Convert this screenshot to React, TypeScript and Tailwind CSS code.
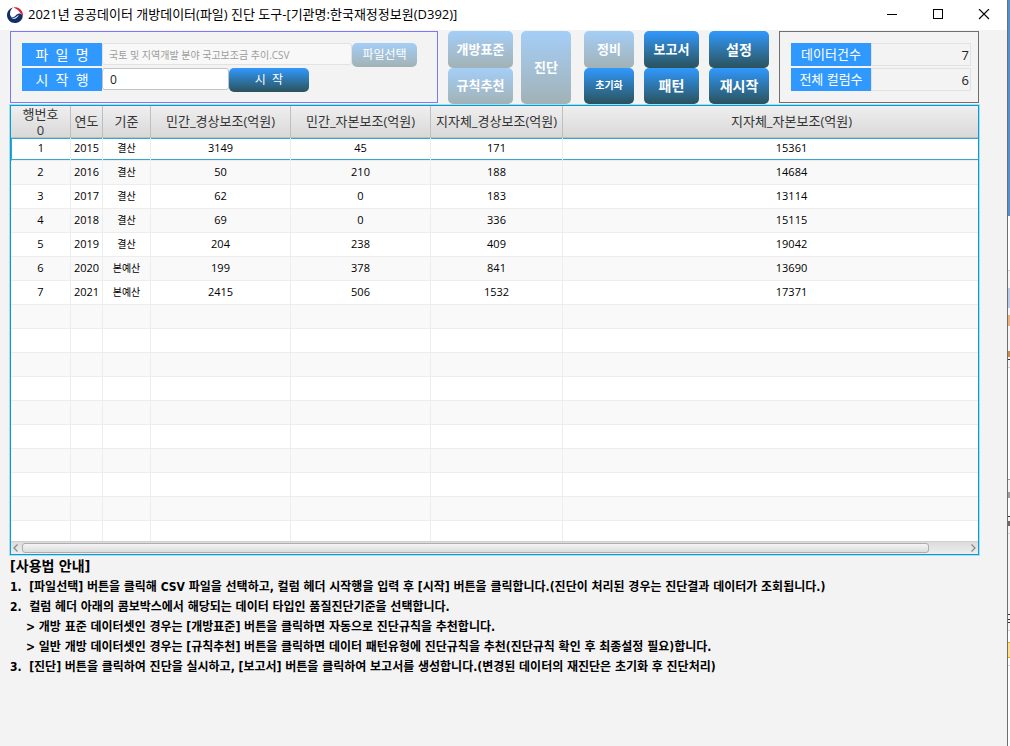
import { useState } from "react";
import type { ReactNode } from "react";

const columns = [
  "연도",
  "기준",
  "민간_경상보조(억원)",
  "민간_자본보조(억원)",
  "지자체_경상보조(억원)",
  "지자체_자본보조(억원)",
];

const rows = [
  ["1", "2015", "결산", "3149", "45", "171", "15361"],
  ["2", "2016", "결산", "50", "210", "188", "14684"],
  ["3", "2017", "결산", "62", "0", "183", "13114"],
  ["4", "2018", "결산", "69", "0", "336", "15115"],
  ["5", "2019", "결산", "204", "238", "409", "19042"],
  ["6", "2020", "본예산", "199", "378", "841", "13690"],
  ["7", "2021", "본예산", "2415", "506", "1532", "17371"],
];

const emptyRows = Array.from({ length: 10 }, (_, i) => i);

const edgeStrips = [
  "h-[216px] bg-[#4f92d3]",
  "h-[54px] bg-white",
  "h-px bg-[#d0d0d0]",
  "h-[17px] bg-[#f5f5f5]",
  "h-[20px] bg-[#b9cbe6]",
  "h-[7px] bg-[#f5f5f5]",
  "h-[11px] bg-[#eab27c]",
  "h-[25px] bg-[#f5f5f5]",
  "h-[6px] bg-[#c98a4a]",
  "h-[2px] bg-[#f5f5f5]",
  "h-px bg-[#333333]",
  "h-[7px] bg-[#f5f5f5]",
  "h-px bg-[#d8d8d8]",
  "h-[111px] bg-white",
  "h-px bg-[#9a9a9a]",
  "h-[12px] bg-[#f5f5f5]",
  "h-[6px] bg-[#a0a0a0]",
  "h-[18px] bg-white",
  "h-px bg-[#333333]",
  "h-[4px] bg-[#f5f5f5]",
  "h-[5px] bg-[#6f6a66]",
  "h-[7px] bg-[#f5f5f5]",
  "h-px bg-[#d8d8d8]",
  "h-[80px] bg-[#f5f5f5]",
  "h-px bg-[#333333]",
  "h-[4px] bg-[#f5f5f5]",
  "h-px bg-[#333333]",
  "h-[2px] bg-[#f5f5f5]",
  "h-px bg-[#333333]",
  "h-[7px] bg-[#f5f5f5]",
  "h-px bg-[#d8d8d8]",
  "h-[11px] bg-white",
  "h-px bg-[#e0b400]",
  "h-[14px] bg-[#fbe28a]",
  "h-px bg-[#e0b400]",
  "h-[7px] bg-white",
  "h-px bg-[#d8d8d8]",
  "flex-1 bg-white",
];

function Logo() {
  return (
    <svg viewBox="0 0 32 32" className="h-4 w-4 shrink-0" aria-hidden="true">
      <path
        d="M12 1C5 3 0 9 0 16.500 0 25 7 32 16 32c7 0 13-4.500 15-10.500 1-4.500-2-8.500-6-8.500-3.500 0-5.500 2-8 4.500-3.500 3.500-7.500 4-9.500 1C4.500 13.500 6.500 5.500 12 1Z"
        fill="#0f2f66"
      />
      <path
        d="M13 .8C21-1 30 4.500 31.700 13.500c.5 3 .3 5-.4 7C31 16 28 12.500 25.500 10.500 23 6 18.500 3 13 .8Z"
        fill="#d8203c"
      />
      <path
        d="M8 20.500c3.500 2.500 7.500 1.500 10.500-1 2-1.800 3.500-3 6-2.500-3 .8-3.500 3.500-6.500 5.500-3.500 2-8 1-10-2Z"
        fill="#ffffff"
      />
    </svg>
  );
}

function ToolButton({
  children,
  className,
  disabled = false,
}: {
  children: ReactNode;
  className: string;
  disabled?: boolean;
}) {
  return (
    <button
      type="button"
      disabled={disabled}
      className={`flex items-center justify-center whitespace-nowrap rounded-[5px] text-white ${
        disabled
          ? "bg-linear-to-b from-[#a4cef8] to-[#a2b2b5]"
          : "bg-linear-to-b from-[#3099ff] to-[#2a525c]"
      } ${className}`}
    >
      {children}
    </button>
  );
}

const labelClass =
  "flex h-[23px] w-20 shrink-0 items-center justify-center whitespace-pre bg-[#3099ff] text-white";

export default function App() {
  const [startRow, setStartRow] = useState("0");

  return (
    <div className="flex min-h-screen bg-[#f3f3f3] font-['Open_Sans','Noto_Sans_CJK_KR',sans-serif] text-black">
      <div className="flex min-w-0 flex-1 flex-col border-r border-[#6f6f6f]">
        <header className="flex h-[30px] items-center justify-between bg-white pl-[7px] pr-[17px]">
          <div className="flex items-center gap-[5px]">
            <Logo />
            <h1 className="whitespace-nowrap pb-[2px] text-[13px] leading-5">
              2021년 공공데이터 개방데이터(파일) 진단 도구-[기관명:한국재정정보원(D392)]
            </h1>
          </div>
          <div className="flex items-center gap-[34px]">
            <button type="button" aria-label="최소화">
              <svg viewBox="0 0 12 12" className="h-3 w-3" shapeRendering="crispEdges">
                <path d="M1 5.500h10" stroke="#000" fill="none" />
              </svg>
            </button>
            <button type="button" aria-label="최대화">
              <svg viewBox="0 0 12 12" className="h-3 w-3" shapeRendering="crispEdges">
                <path d="M1.500 .5h9v9h-9z" stroke="#000" fill="none" />
              </svg>
            </button>
            <button type="button" aria-label="닫기">
              <svg viewBox="0 0 12 12" className="h-3 w-3">
                <path d="M1 0l10 10M11 0L1 10" stroke="#000" strokeWidth="1.100" fill="none" />
              </svg>
            </button>
          </div>
        </header>

        <main className="flex flex-col pl-[10px] pr-7 pt-px">
          <div className="flex h-[73px] items-start justify-between">
            <section className="flex h-[72px] w-[428px] flex-col gap-[2px] border border-[#7b78ff] px-[11px] pt-[11px]">
              <div className="flex h-[23px] items-start">
                <label htmlFor="file" className={`${labelClass} text-[14px]`}>
                  {"파  일  명"}
                </label>
                <input
                  id="file"
                  disabled
                  value="국토 및 지역개발 분야 국고보조금 추이.CSV"
                  className="h-[22px] w-[250px] rounded-[3px] border border-[#e2e2e2] bg-[#f8f8f8] px-[6px] text-[10px] text-[#9c9c9c]"
                />
                <ToolButton disabled className="h-6 w-[65px] text-[12px]">
                  파일선택
                </ToolButton>
              </div>
              <div className="flex h-[23px] items-start">
                <label htmlFor="start" className={`${labelClass} text-[14px]`}>
                  {"시  작  행"}
                </label>
                <input
                  id="start"
                  value={startRow}
                  onChange={(e) => setStartRow(e.target.value)}
                  className="h-[22px] w-[127px] rounded-[3px] border border-[#c3c3c3] bg-white px-[7px] text-[12px] text-[#222222]"
                />
                <ToolButton className="h-6 w-20 whitespace-pre text-[12px]">{"시  작"}</ToolButton>
              </div>
            </section>

            <div className="flex h-[73px] gap-[10px]">
              <div className="flex gap-[13px]">
                <div className="flex gap-2">
                  <div className="flex w-[65px] flex-col">
                    <ToolButton disabled className="flex-1 text-[13px] font-bold">
                      개방표준
                    </ToolButton>
                    <ToolButton disabled className="flex-1 text-[13px] font-bold">
                      규칙추천
                    </ToolButton>
                  </div>
                  <ToolButton disabled className="w-[50px] text-[13px] font-bold">
                    진단
                  </ToolButton>
                </div>
                <div className="flex w-[50px] flex-col">
                  <ToolButton disabled className="flex-1 text-[13px] font-bold">
                    정비
                  </ToolButton>
                  <ToolButton className="flex-1 text-[10px] font-bold">초기화</ToolButton>
                </div>
              </div>
              <div className="flex w-[55px] flex-col">
                <ToolButton className="flex-1 text-[13px] font-bold">보고서</ToolButton>
                <ToolButton className="flex-1 text-[14px] font-bold">패턴</ToolButton>
              </div>
              <div className="flex w-[60px] flex-col">
                <ToolButton className="flex-1 text-[14px] font-bold">설정</ToolButton>
                <ToolButton className="flex-1 text-[14px] font-bold">재시작</ToolButton>
              </div>
            </div>

            <section className="flex h-[72px] w-[200px] flex-col gap-[2px] border border-[#6f6f6f] pl-[11px] pr-[7px] pt-[11px]">
              <div className="flex">
                <label htmlFor="dataCount" className={`${labelClass} text-[13px]`}>
                  데이터건수
                </label>
                <input
                  id="dataCount"
                  readOnly
                  value="7"
                  className="h-[23px] w-[100px] min-w-0 border border-[#e2e2e2] bg-[#f3f3f3] px-px text-right text-[13px] text-[#222222]"
                />
              </div>
              <div className="flex">
                <label htmlFor="columnCount" className={`${labelClass} text-[13px]`}>
                  전체 컬럼수
                </label>
                <input
                  id="columnCount"
                  readOnly
                  value="6"
                  className="h-[23px] w-[100px] min-w-0 border border-[#e2e2e2] bg-[#f3f3f3] px-px text-right text-[13px] text-[#222222]"
                />
              </div>
            </section>
          </div>

          <div className="mt-px border border-[#039ed3] bg-white shadow-[0_0_0_1px_#a9dcee]">
            <div className="h-[435px] overflow-hidden">
              <table className="w-[calc(100%+42px)] table-fixed border-separate border-spacing-0 text-center">
                <colgroup>
                  <col className="w-[60px]" />
                  <col className="w-8" />
                  <col className="w-12" />
                  <col className="w-[140px]" />
                  <col className="w-[140px]" />
                  <col className="w-[132px]" />
                  <col />
                </colgroup>
                <thead>
                  <tr className="h-8 bg-linear-to-b from-[#efefef] to-[#d8d8d8] text-[13px] leading-4 text-[#333333]">
                    <th className="h-8 border-r border-[#bfbfbf] p-0 font-normal shadow-[inset_0_-1px_0_#bfbfbf]">
                      행번호
                      <br />0
                    </th>
                    {columns.map((name) => (
                      <th
                        key={name}
                        className="h-8 whitespace-nowrap border-r border-[#bfbfbf] p-0 pb-[2px] font-normal shadow-[inset_0_-1px_0_#bfbfbf] last:border-r-0"
                      >
                        {name}
                      </th>
                    ))}
                  </tr>
                </thead>
                <tbody className="text-[11px] leading-4">
                  {rows.map((row, r) => (
                    <tr key={row[0]} className="odd:bg-white even:bg-[#f9f9f9]">
                      {row.map((cell, c) => (
                        <td
                          key={c}
                          className={`border-b border-r border-[#ededed] p-0 last:border-r-0 ${
                            r === 0
                              ? "h-[23px] pb-[2px] shadow-[inset_0_1px_0_#35a5d5,inset_0_-1px_0_#35a5d5] first:border-l first:border-l-[#35a5d5]"
                              : "h-6 pb-px"
                          } ${c === 2 ? "text-[10px]" : ""}`}
                        >
                          {cell}
                        </td>
                      ))}
                    </tr>
                  ))}
                  {emptyRows.map((r) => (
                    <tr key={`empty-${r}`} className="odd:bg-white even:bg-[#f9f9f9]">
                      {[0, 1, 2, 3, 4, 5, 6].map((c) => (
                        <td
                          key={c}
                          className="h-6 border-b border-r border-[#ededed] p-0 last:border-r-0"
                        />
                      ))}
                    </tr>
                  ))}
                </tbody>
              </table>
            </div>
            <div className="flex h-[13px] items-center border-t border-[#cfcfcf] bg-linear-to-b from-[#dcdcdc] to-[#eeeeee] px-[2px]">
              <svg viewBox="0 0 6 8" className="h-2 w-[6px]" aria-hidden="true">
                <path d="M4.500 .5L1 4l3.500 3.500" stroke="#8a8a8a" strokeWidth="1.300" fill="none" />
              </svg>
              <div className="flex flex-1 pl-[3px] pr-[41px]">
                <div className="h-[10px] flex-1 rounded-[3px] border border-[#adadad] bg-linear-to-b from-[#f5f5f5] to-[#dcdcdc]" />
              </div>
              <svg viewBox="0 0 6 8" className="h-2 w-[6px]" aria-hidden="true">
                <path d="M1.500 .5L5 4 1.500 7.500" stroke="#8a8a8a" strokeWidth="1.300" fill="none" />
              </svg>
            </div>
          </div>

          <section className="whitespace-pre pt-px font-['DejaVu_Sans_Condensed','Noto_Sans_CJK_KR',sans-serif] text-[12px] font-bold leading-5">
            <h2 className="pb-px text-[14px] font-bold leading-5">[사용법 안내]</h2>
            <p>{"1.  [파일선택] 버튼을 클릭해 CSV 파일을 선택하고, 컬럼 헤더 시작행을 입력 후 [시작] 버튼을 클릭합니다.(진단이 처리된 경우는 진단결과 데이터가 조회됩니다.)"}</p>
            <p>{"2.  컬럼 헤더 아래의 콤보박스에서 해당되는 데이터 타입인 품질진단기준을 선택합니다."}</p>
            <p className="pl-4">{"> 개방 표준 데이터셋인 경우는 [개방표준] 버튼을 클릭하면 자동으로 진단규칙을 추천합니다."}</p>
            <p className="pl-4">{"> 일반 개방 데이터셋인 경우는 [규칙추천] 버튼을 클릭하면 데이터 패턴유형에 진단규칙을 추천(진단규칙 확인 후 최종설정 필요)합니다."}</p>
            <p>{"3.  [진단] 버튼을 클릭하여 진단을 실시하고, [보고서] 버튼을 클릭하여 보고서를 생성합니다.(변경된 데이터의 재진단은 초기화 후 진단처리)"}</p>
          </section>
        </main>
      </div>
      <div className="flex w-[2px] shrink-0 flex-col" aria-hidden="true">
        {edgeStrips.map((strip, i) => (
          <div key={i} className={strip} />
        ))}
      </div>
    </div>
  );
}
